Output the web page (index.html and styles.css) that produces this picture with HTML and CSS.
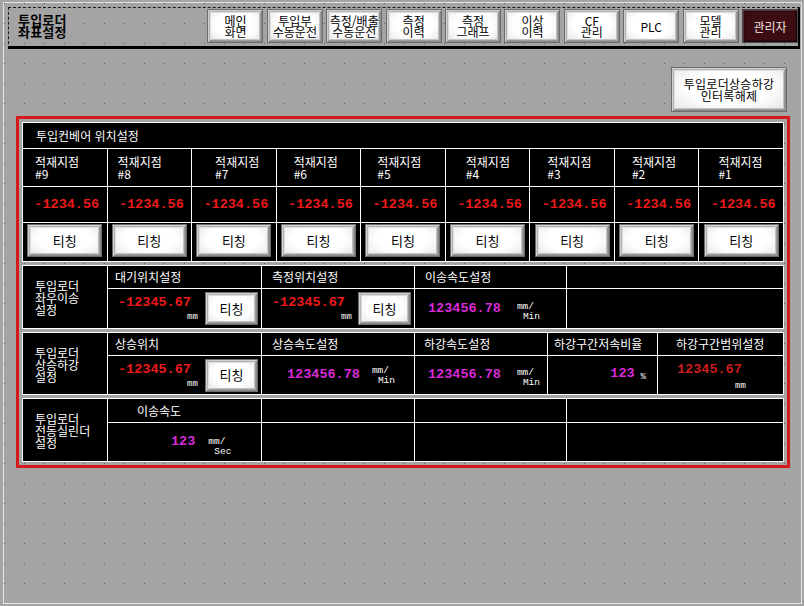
FILE: index.html
```html
<!DOCTYPE html>
<html lang="ko">
<head>
<meta charset="utf-8">
<title>투입로더 좌표설정</title>
<link rel="stylesheet" href="styles.css">
</head>
<body>
<div class="screen">
  <div class="window">
    <header class="topbar">
      <div class="title">투입로더<br>좌표설정</div>
      <nav class="nav">
        <button class="btn nav-btn">메인<br>화면</button>
        <button class="btn nav-btn">투입부<br>수동운전</button>
        <button class="btn nav-btn">측정/배출<br>수동운전</button>
        <button class="btn nav-btn">측정<br>이력</button>
        <button class="btn nav-btn">측정<br>그래프</button>
        <button class="btn nav-btn">이상<br>이력</button>
        <button class="btn nav-btn">CF<br>관리</button>
        <button class="btn nav-btn">PLC</button>
        <button class="btn nav-btn">모델<br>관리</button>
        <button class="btn nav-btn admin">관리자</button>
      </nav>
    </header>

    <div class="toolrow">
      <button class="btn big-btn">투입로더상승하강<br>인터록해제</button>
    </div>

    <div class="frame">
      <section class="sec sec-conv">
        <div class="cell title-cell">투입컨베어 위치설정</div>
        <div class="cell head-cell">적재지점<br>#9</div>
        <div class="cell head-cell">적재지점<br>#8</div>
        <div class="cell head-cell">적재지점<br>#7</div>
        <div class="cell head-cell">적재지점<br>#6</div>
        <div class="cell head-cell">적재지점<br>#5</div>
        <div class="cell head-cell">적재지점<br>#4</div>
        <div class="cell head-cell">적재지점<br>#3</div>
        <div class="cell head-cell">적재지점<br>#2</div>
        <div class="cell head-cell">적재지점<br>#1</div>
        <div class="cell num-cell"><span class="num red">-1234.56</span></div>
        <div class="cell num-cell"><span class="num red">-1234.56</span></div>
        <div class="cell num-cell"><span class="num red">-1234.56</span></div>
        <div class="cell num-cell"><span class="num red">-1234.56</span></div>
        <div class="cell num-cell"><span class="num red">-1234.56</span></div>
        <div class="cell num-cell"><span class="num red">-1234.56</span></div>
        <div class="cell num-cell"><span class="num red">-1234.56</span></div>
        <div class="cell num-cell"><span class="num red">-1234.56</span></div>
        <div class="cell num-cell"><span class="num red">-1234.56</span></div>
        <div class="cell btn-cell"><button class="btn teach">티칭</button></div>
        <div class="cell btn-cell"><button class="btn teach">티칭</button></div>
        <div class="cell btn-cell"><button class="btn teach">티칭</button></div>
        <div class="cell btn-cell"><button class="btn teach">티칭</button></div>
        <div class="cell btn-cell"><button class="btn teach">티칭</button></div>
        <div class="cell btn-cell"><button class="btn teach">티칭</button></div>
        <div class="cell btn-cell"><button class="btn teach">티칭</button></div>
        <div class="cell btn-cell"><button class="btn teach">티칭</button></div>
        <div class="cell btn-cell"><button class="btn teach">티칭</button></div>
      </section>

      <section class="sec sec-five">
        <div class="cell label-cell">투입로더<br>좌우이송<br>설정</div>
        <div class="cell hd hd-a">대기위치설정</div>
        <div class="cell hd">측정위치설정</div>
        <div class="cell hd">이송속도설정</div>
        <div class="cell"></div>
        <div class="cell val">
          <div class="readout"><span class="num red">-12345.67</span><span class="unit">mm</span></div>
          <button class="btn teach sm">티칭</button>
        </div>
        <div class="cell val">
          <div class="readout"><span class="num red">-12345.67</span><span class="unit">mm</span></div>
          <button class="btn teach sm">티칭</button>
        </div>
        <div class="cell spd">
          <span class="num mag">123456.78</span>
          <span class="unit2"><span>mm/</span><span class="ind">Min</span></span>
        </div>
        <div class="cell"></div>
      </section>

      <section class="sec sec-six">
        <div class="cell label-cell">투입로더<br>상승하강<br>설정</div>
        <div class="cell hd hd-a">상승위치</div>
        <div class="cell hd">상승속도설정</div>
        <div class="cell hd hd-b">하강속도설정</div>
        <div class="cell hd hd-c">하강구간저속비율</div>
        <div class="cell hd hd-d">하강구간범위설정</div>
        <div class="cell val">
          <div class="readout"><span class="num red">-12345.67</span><span class="unit">mm</span></div>
          <button class="btn teach sm">티칭</button>
        </div>
        <div class="cell spd spd-wide">
          <span class="num mag">123456.78</span>
          <span class="unit2"><span>mm/</span><span class="ind">Min</span></span>
        </div>
        <div class="cell spd">
          <span class="num mag">123456.78</span>
          <span class="unit2"><span>mm/</span><span class="ind">Min</span></span>
        </div>
        <div class="cell pct">
          <span class="num mag">123</span><span class="pct-unit">%</span>
        </div>
        <div class="cell range">
          <div class="readout"><span class="num dark-red">12345.67</span><span class="unit unit-r">mm</span></div>
        </div>
      </section>

      <section class="sec sec-five sec-last">
        <div class="cell label-cell">투입로더<br>전동실린더<br>설정</div>
        <div class="cell hd hd-e">이송속도</div>
        <div class="cell"></div>
        <div class="cell"></div>
        <div class="cell"></div>
        <div class="cell spd spd-sec">
          <span class="num mag">123</span>
          <span class="unit2"><span>mm/</span><span class="ind">Sec</span></span>
        </div>
        <div class="cell"></div>
        <div class="cell"></div>
        <div class="cell"></div>
      </section>
    </div>
  </div>
</div>
</body>
</html>
```

FILE: styles.css
```css
html, body {
  margin: 0;
  padding: 0;
}

body {
  width: 804px;
  height: 606px;
  overflow: hidden;
  background: #a4a4a4;
  font-family: "Noto Sans CJK KR", "Noto Sans", sans-serif;
}

.screen {
  width: 804px;
  height: 606px;
  box-sizing: border-box;
  padding: 2px 2px 2px 3px;
  background-color: #a4a4a4;
  background-image: conic-gradient(at 1px 1px, transparent 270deg, #5e5e5e 270deg);
  background-size: 20px 20px;
  background-position: 4px 3px;
}

.window {
  height: 100%;
  box-sizing: border-box;
  border: 1px solid #e4e4e4;
}

/* ---------- header ---------- */
.topbar {
  display: flex;
  justify-content: space-between;
  align-items: flex-start;
  margin: 4px 1px 0 4px;
  height: 38px;
  border: 1px dashed #1a1a1a;
  border-bottom: 3px solid #000;
  border-right: 2px solid #000;
}

.title {
  margin: 6px 0 0 9px;
  font-size: 13px;
  line-height: 12px;
  font-weight: 700;
  color: #000;
  letter-spacing: 0.2px;
}

.nav {
  display: flex;
  gap: 3.4px;
  margin: 1px 0 0 0;
}

.btn {
  font-family: "Noto Sans CJK KR", "Noto Sans", sans-serif;
  color: #000;
  padding: 0;
  border: 1px solid #6c6c6c;
  background: radial-gradient(ellipse at 50% 45%, #ffffff 50%, #e2e2e2 100%);
  box-shadow:
    inset 1px 1px 0 #cfcfcf,
    inset -1px -1px 0 #8a8a8a,
    inset 2px 2px 0 #b4b4b4,
    inset -2px -2px 0 #9a9a9a,
    inset 3px 3px 0 #dedede,
    inset -3px -3px 0 #c4c4c4;
  cursor: default;
}

.nav-btn {
  width: 56px;
  height: 34px;
  font-size: 12px;
  line-height: 11px;
}

.nav-btn.admin {
  background: #3b0c12;
  color: #f2e4e4;
  border-color: #4a4a4a;
  box-shadow:
    inset 1px 1px 0 #5a3036,
    inset -1px -1px 0 #1e0508,
    inset 2px 2px 0 #2a0a0e,
    inset -2px -2px 0 #2a0a0e;
}

/* ---------- tool row ---------- */
.toolrow {
  display: flex;
  justify-content: flex-end;
  margin-top: 18px;
  padding-right: 14px;
}

.big-btn {
  width: 116px;
  height: 45px;
  font-size: 12px;
  line-height: 12px;
  letter-spacing: 0.3px;
}

/* ---------- red frame ---------- */
.frame {
  width: 762px;
  margin: 4px 0 0 12px;
  border: 3px solid #d41b1b;
  padding: 3px;
  display: flex;
  flex-direction: column;
  gap: 3px;
}

.sec {
  display: grid;
  background: #fff;
  gap: 1px;
  padding: 1px;
}

.cell {
  background: #000;
  color: #fff;
  font-size: 12px;
  line-height: 12px;
  min-width: 0;
  box-sizing: border-box;
}

/* section 1 */
.sec-conv {
  grid-template-columns: repeat(9, 1fr);
  grid-template-rows: 25px 37px 35px 38px;
}

.title-cell {
  grid-column: 1 / -1;
  display: flex;
  align-items: center;
  padding-left: 13px;
}

.head-cell {
  display: flex;
  flex-direction: column;
  justify-content: center;
  padding-left: 17px;
  padding-top: 1px;
}

.head-cell:nth-child(2) { padding-left: 12px; }
.head-cell:nth-child(3) { padding-left: 10px; }
.head-cell:nth-child(4) { padding-left: 23px; }
.head-cell:nth-child(5) { padding-left: 17px; }
.head-cell:nth-child(6) { padding-left: 16px; }
.head-cell:nth-child(7) { padding-left: 20px; }
.head-cell:nth-child(10) { padding-left: 19px; }

.num-cell {
  display: flex;
  align-items: center;
  justify-content: center;
  padding-left: 4px;
}

.num {
  font-family: "Liberation Mono", "DejaVu Sans Mono", monospace;
  font-weight: 700;
  font-size: 13.5px;
  line-height: 16px;
  white-space: nowrap;
}

.red { color: #ec1a1a; }
.dark-red { color: #cc1c1c; }
.mag { color: #d82ad8; }

.btn-cell {
  display: flex;
  justify-content: center;
  align-items: flex-start;
  padding-top: 1px;
}

.teach {
  width: 75px;
  height: 33px;
  font-size: 13px;
  line-height: 14px;
}

.teach.sm {
  width: 53px;
}

/* sections 2-4 */
.sec-five {
  grid-template-columns: 84px 153px 152px 151px 1fr;
  grid-template-rows: 22px 39px;
}

.sec-six {
  grid-template-columns: 84px 153px 152px 132px 109px 1fr;
  grid-template-rows: 22px 38px;
}

.sec-last {
  grid-template-rows: 23px 38px;
}

.label-cell {
  grid-row: span 2;
  display: flex;
  align-items: center;
  padding-left: 12px;
  padding-top: 2px;
}

.hd {
  display: flex;
  align-items: center;
  padding-left: 10px;
}

.hd-a { padding-left: 7px; }
.hd-b { padding-left: 9px; }
.hd-c { padding-left: 6px; }
.hd-d { padding-left: 18px; }
.hd-e { padding-left: 29px; }

.val {
  display: flex;
  align-items: center;
  justify-content: space-between;
  padding: 0 3px 0 10px;
}

.readout {
  display: flex;
  flex-direction: column;
  align-items: flex-end;
}

.unit {
  font-family: "Liberation Mono", "DejaVu Sans Mono", monospace;
  font-size: 9px;
  line-height: 9px;
  margin: 2px -7px 0 0;
  color: #fff;
}

.unit-r {
  margin: 4px -4px 0 0;
}

.spd {
  display: flex;
  align-items: center;
  padding-left: 13px;
}

.spd-wide {
  padding-left: 25px;
}

.spd-sec {
  padding-left: 63px;
}

.unit2 {
  display: flex;
  flex-direction: column;
  margin: 6px 0 0 16px;
  font-family: "Liberation Mono", "DejaVu Sans Mono", monospace;
  font-size: 9.5px;
  line-height: 10px;
}

.spd-wide .unit2 {
  margin: 2px 0 0 12px;
}

.spd-sec .unit2 {
  margin: 9px 0 0 13px;
}

.unit2 .ind {
  padding-left: 6px;
}

.pct {
  display: flex;
  align-items: center;
  justify-content: flex-end;
  padding: 0 11px 2px 0;
}

.pct-unit {
  font-family: "Liberation Mono", "DejaVu Sans Mono", monospace;
  font-size: 9px;
  margin: 6px 0 0 6px;
}

.range {
  display: flex;
  align-items: center;
  padding: 2px 0 0 19px;
}
```
